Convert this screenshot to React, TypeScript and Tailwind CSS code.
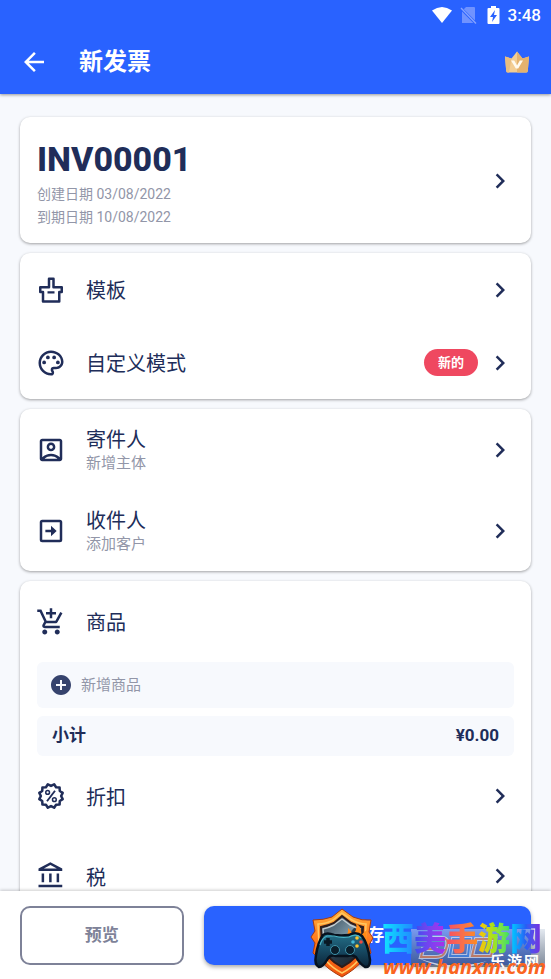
import type { ReactNode } from "react";
import {
  MdAddCircle,
  MdArrowBack,
  MdChevronRight,
  MdOutlineAccountBalance,
  MdOutlineAccountBox,
  MdOutlineAddShoppingCart,
  MdOutlinePalette,
} from "react-icons/md";

interface RowProps {
  icon: ReactNode;
  title: string;
  subtitle?: string;
  badge?: string;
  className: string;
}

function Row({ icon, title, subtitle, badge, className }: RowProps) {
  return (
    <button type="button" className={`flex w-full items-center px-4 text-left ${className}`}>
      {icon}
      <span className="ml-5 flex flex-1 flex-col pt-[3px]">
        <span className="text-[20px] leading-6">{title}</span>
        {subtitle && <span className="text-[15px] leading-[22px] text-[#9296a8]">{subtitle}</span>}
      </span>
      {badge && (
        <span className="mr-[7px] rounded-full bg-[#ef4860] px-[14px] text-[13px] font-bold leading-[27px] text-white">
          {badge}
        </span>
      )}
      <MdChevronRight size={30} />
    </button>
  );
}

function Card({ children }: { children: ReactNode }) {
  return (
    <section className="shrink-0 overflow-hidden rounded-[10px] bg-white shadow-[0_1px_3px_rgba(0,0,0,0.36)]">
      {children}
    </section>
  );
}

function TemplateIcon() {
  return (
    <svg width="30" height="30" viewBox="0 0 24 24" fill="none" stroke="currentColor" strokeWidth="2" strokeLinejoin="round">
      <path d="M10.4 3h3.6v6.800h6.600v3.800H18.600V21.200H5.600V13.600H3.400V9.800h7z" />
      <path d="M9.200 13.900h5.600" strokeWidth="1.800" />
    </svg>
  );
}

function ReceiverIcon() {
  return (
    <svg width="30" height="30" viewBox="0 0 24 24" fill="none" stroke="currentColor" strokeWidth="2">
      <rect x="4" y="4" width="16" height="16" rx="1" />
      <path d="M7.500 12H13" />
      <path d="M12 7.800L16.500 12L12 16.200z" fill="currentColor" stroke="none" />
    </svg>
  );
}

const sealPoints = Array.from({ length: 24 }, (_, i) => {
  const angle = ((i + 1) * Math.PI) / 12;
  const radius = i % 2 ? 8.1 : 9.7;
  return `${(12 + radius * Math.sin(angle)).toFixed(2)},${(12 - radius * Math.cos(angle)).toFixed(2)}`;
}).join(" ");

function DiscountIcon() {
  return (
    <svg width="30" height="30" viewBox="0 0 24 24" fill="none" stroke="currentColor" strokeLinejoin="round">
      <polygon points={sealPoints} strokeWidth="2" />
      <circle cx="9.300" cy="9.100" r="1.500" strokeWidth="1.200" />
      <circle cx="14.700" cy="14.900" r="1.500" strokeWidth="1.200" />
      <path d="M15.200 7.800L8.800 16.200" strokeWidth="1.500" />
    </svg>
  );
}

function CrownIcon() {
  return (
    <svg width="26" height="24" viewBox="0 0 26 24">
      <path d="M1 6.500L7.500 8.500L13 1.500L18.500 8.500L25 6.500L23.800 21Q23.600 22.500 22 22.500H4Q2.400 22.500 2.200 21z" fill="#f3cd93" />
      <path d="M1 6.500L7.500 8.500L5 22.500H4Q2.400 22.500 2.200 21z" fill="#e8bd80" />
      <path d="M13 1.500L18.500 8.500L25 6.500L23.800 21Q23.600 22.500 22 22.500H13z" fill="#e4b26f" />
      <path d="M7 10.500H10.200L13 15.500L15.800 10.500H19L14.200 18.500H11.800z" fill="#fffaf0" />
    </svg>
  );
}

function StatusBar() {
  return (
    <div className="flex h-[30px] items-center justify-end pr-[10px]">
      <svg className="mr-[7px]" width="22" height="18" viewBox="0 0 22 18">
        <path d="M1 4.500Q11-2.500 21 4.500L11 17z" fill="#fff" />
      </svg>
      <svg className="mr-[10px]" width="17" height="18" viewBox="0 0 17 18">
        <path d="M6 1H14Q15 1 15 2V17H2V5z" fill="#7093ff" />
        <path d="M0 1.500L16 17.500" stroke="#2962ff" strokeWidth="3" />
        <path d="M1 2L16 17.500" stroke="#85a3ff" strokeWidth="1.400" />
      </svg>
      <svg className="mr-[8px]" width="13" height="18" viewBox="0 0 13 18">
        <path d="M4 0H9V2H11.500Q12.500 2 12.500 3V17Q12.500 18 11.500 18H1.500Q.5 18 .5 17V3Q.5 2 1.500 2H4z" fill="#fff" />
        <path d="M8 4L3 11H6L5 16L10 9H7z" fill="#2962ff" />
      </svg>
      <span className="text-[17px] font-medium leading-5">3:48</span>
    </div>
  );
}

function ShieldLogo() {
  return (
    <svg width="64" height="72" viewBox="0 0 64 72">
      <defs>
        <linearGradient id="flame" x1="0" y1="0" x2="0" y2="1">
          <stop offset="0" stopColor="#ffb13c" />
          <stop offset="0.45" stopColor="#ff7a1e" />
          <stop offset="1" stopColor="#f0520b" />
        </linearGradient>
        <linearGradient id="steel" x1="0" y1="0" x2="1" y2="1">
          <stop offset="0" stopColor="#2c3f4d" />
          <stop offset="0.5" stopColor="#7b96a6" />
          <stop offset="0.520" stopColor="#2b3d4b" />
          <stop offset="1" stopColor="#16212b" />
        </linearGradient>
        <linearGradient id="pad" x1="0" y1="0" x2="0" y2="1">
          <stop offset="0" stopColor="#247189" />
          <stop offset="0.5" stopColor="#174a63" />
          <stop offset="1" stopColor="#0b2438" />
        </linearGradient>
      </defs>
      <path d="M32 2L43 10Q52 14 61 13L59 25L63 31L59 38L61 46L53 53Q46 62 32 70Q17 62 11 54L3 46L5 36L1 30L5 24L3 13Q14 13 22 10z" fill="url(#flame)" stroke="#a83a0c" strokeWidth="1" />
      <path d="M32 6L42 13Q49 17 56 17L55 40Q51 56 32 66Q13 56 9 40L8 17Q16 17 23 13z" fill="none" stroke="#ffc861" strokeWidth="1.500" />
      <path d="M32 9L41 16Q47 19 53 20L52 38Q48 52 32 60Q16 52 12 38L11 20Q18 19 24 16z" fill="url(#steel)" stroke="#301d1b" strokeWidth="2" />
      <path d="M32 12L40 18Q46 21 51 22M32 12L24 18Q18 21 13 22L14 34" fill="none" stroke="#c4cdd0" strokeWidth="1.400" />
      <path d="M34 31Q39 27 38 21Q43 25 42 29Q48 23 46 16Q54 22 50 29L57 23Q55 31 58 37L51 42L33 36z" fill="#ff8b17" />
      <path d="M39 33Q44 31 43 26Q48 29 47 32L52 28L51 38z" fill="#ffdb4d" />
      <path d="M13 28Q17 25 24 28Q31 29 39 28Q46 24 52 29Q58 37 60 53Q60 61 55 60Q50 57 46 50Q42 47 38 49H26Q20 47 17 53Q13 60 9 60Q4 58 6 48Q8 35 13 28z" fill="url(#pad)" stroke="#07121e" strokeWidth="2.500" />
      <path d="M10 38Q12 31 17 29H24Q31 31 39 30Q47 26 51 31" fill="none" stroke="#4ab3c6" strokeWidth="1.200" />
      <path d="M18 31V39M14 35H22" stroke="#091824" strokeWidth="3.500" />
      <circle cx="25" cy="43" r="4.500" fill="#0a1e2b" stroke="#3f93aa" />
      <circle cx="40" cy="43" r="4.500" fill="#0a1e2b" stroke="#3f93aa" />
      <circle cx="47" cy="31" r="1.800" fill="#ffc52c" />
      <circle cx="43" cy="35" r="1.800" fill="#42b8d6" />
      <circle cx="51" cy="35" r="1.800" fill="#ef4a42" />
      <circle cx="47" cy="39" r="1.800" fill="#ffc52c" />
    </svg>
  );
}

function Watermark() {
  return (
    <div className="pointer-events-none absolute right-0 bottom-0 h-[72px] w-[241px]">
      <div className="absolute right-[6px] bottom-[12px] h-[38px] w-[134px] bg-linear-to-b from-slate-300/50 to-slate-600/70">
        <svg width="134" height="38" viewBox="0 0 134 38" fill="none" opacity="0.7">
          <path d="M16 9H31Q38 9 36 17L34 23Q32 28 25 28H10L12 20H27M42 10H59L57 27H39zM65 10H84L80 27H61z" stroke="#dfe5f5" strokeWidth="4" />
          <path d="M16 9H31Q38 9 36 17L34 23Q32 28 25 28H10L12 20H27M65 10H84L80 27H61z" stroke="#e8814b" strokeWidth="2" />
          <path d="M42 10H59L57 27H39z" stroke="#3f86e8" strokeWidth="2" />
          <path d="M7 29Q40 42 76 32Q44 47 7 29" fill="#fff" />
        </svg>
      </div>
      <span className="absolute right-[12px] bottom-[9px] flex gap-[2px] text-[15px] font-bold leading-4 text-white">
        <span>乐</span>
        <span>游</span>
        <span>网</span>
      </span>
      <span className="absolute right-[9px] bottom-[18px] flex text-[32px] font-black leading-[44px]">
        <span className="bg-linear-to-r from-[#16e6ff] to-[#2485ff] bg-clip-text text-transparent">西</span>
        <span className="bg-linear-to-r from-[#344bf0] to-[#ad28ee] bg-clip-text text-transparent">美</span>
        <span className="bg-linear-to-r from-[#f34b64] to-[#ff8c12] bg-clip-text text-transparent">手</span>
        <span className="bg-linear-to-r from-[#ffbc05] via-[#9ee51c] to-[#27df65] bg-clip-text text-transparent">游</span>
        <span className="bg-linear-to-r from-[#08d3ff] via-[#275df4] to-[#7928dc] bg-clip-text text-transparent">网</span>
      </span>
      <span className="absolute right-[5px] bottom-0 font-['Open_Sans',sans-serif] text-[20px] font-bold italic leading-6 text-[#fa6420]">
        www.hanxm.com
      </span>
      <div className="absolute bottom-0 left-0">
        <ShieldLogo />
      </div>
    </div>
  );
}

export default function App() {
  return (
    <div className="relative flex h-screen flex-col overflow-hidden bg-[#f7f9fd] font-[Roboto,'Noto_Sans_CJK_SC',sans-serif] text-[#202d59]">
      <header className="z-10 shrink-0 bg-[#2962ff] text-white shadow-[0_1px_3px_rgba(0,0,0,0.4)]">
        <StatusBar />
        <div className="flex h-16 items-center px-[19px]">
          <button type="button" aria-label="返回">
            <MdArrowBack size={30} />
          </button>
          <h1 className="ml-[30px] flex-1 text-[24px] font-bold leading-8">新发票</h1>
          <button type="button" aria-label="会员" className="mr-[2px]">
            <CrownIcon />
          </button>
        </div>
      </header>

      <main className="flex min-h-0 flex-1 flex-col gap-[10px] overflow-y-auto px-5 pt-[23px] [scrollbar-width:none]">
        <Card>
          <button type="button" className="flex w-full items-center px-4 pt-4 pb-[14px] text-left">
            <span className="flex flex-1 flex-col pt-[6px] pl-px">
              <span className="mb-1 text-[34px] font-extrabold leading-10">INV00001</span>
              <span className="text-[14px] leading-[23px] text-[#9296a8]">创建日期 03/08/2022</span>
              <span className="text-[14px] leading-[23px] text-[#9296a8]">到期日期 10/08/2022</span>
            </span>
            <MdChevronRight size={30} />
          </button>
        </Card>

        <Card>
          <Row icon={<TemplateIcon />} title="模板" className="h-[73px]" />
          <Row icon={<MdOutlinePalette size={30} />} title="自定义模式" badge="新的" className="h-[73px]" />
        </Card>

        <Card>
          <Row icon={<MdOutlineAccountBox size={30} />} title="寄件人" subtitle="新增主体" className="h-[81px]" />
          <Row icon={<ReceiverIcon />} title="收件人" subtitle="添加客户" className="h-[81px]" />
        </Card>

        <Card>
          <div className="flex h-[81px] items-center px-4">
            <MdOutlineAddShoppingCart size={30} />
            <h2 className="ml-5 pt-[3px] text-[20px] leading-6">商品</h2>
          </div>
          <div className="flex flex-col gap-2 px-[17px]">
            <button type="button" className="flex h-[46px] items-center gap-2 rounded-md bg-[#f7f9fd] px-3 text-[15px] text-[#9296a8]">
              <MdAddCircle size={24} className="text-[#36436d]" />
              新增商品
            </button>
            <div className="flex h-10 items-center justify-between rounded-md bg-[#f7f9fd] px-[15px] text-[17px]">
              <span className="font-bold">小计</span>
              <span className="font-bold">¥0.00</span>
            </div>
          </div>
          <Row icon={<DiscountIcon />} title="折扣" className="h-20" />
          <Row icon={<MdOutlineAccountBalance size={30} />} title="税" className="h-20" />
        </Card>
      </main>

      <footer className="z-10 grid shrink-0 grid-cols-[1fr_2fr] gap-5 bg-white px-5 pt-[15px] pb-[14px] shadow-[0_-1px_3px_rgba(0,0,0,0.2)]">
        <button type="button" className="h-[59px] rounded-[10px] border-2 border-[#7e8298] text-[17px] font-bold text-[#7e8298]">
          预览
        </button>
        <button type="button" className="h-[59px] rounded-[10px] bg-[#2962ff] text-[17px] font-bold text-white shadow-[0_2px_4px_rgba(0,0,0,0.35)]">
          保存
        </button>
      </footer>
      <div className="absolute right-0 bottom-0 z-20">
        <Watermark />
      </div>
    </div>
  );
}
